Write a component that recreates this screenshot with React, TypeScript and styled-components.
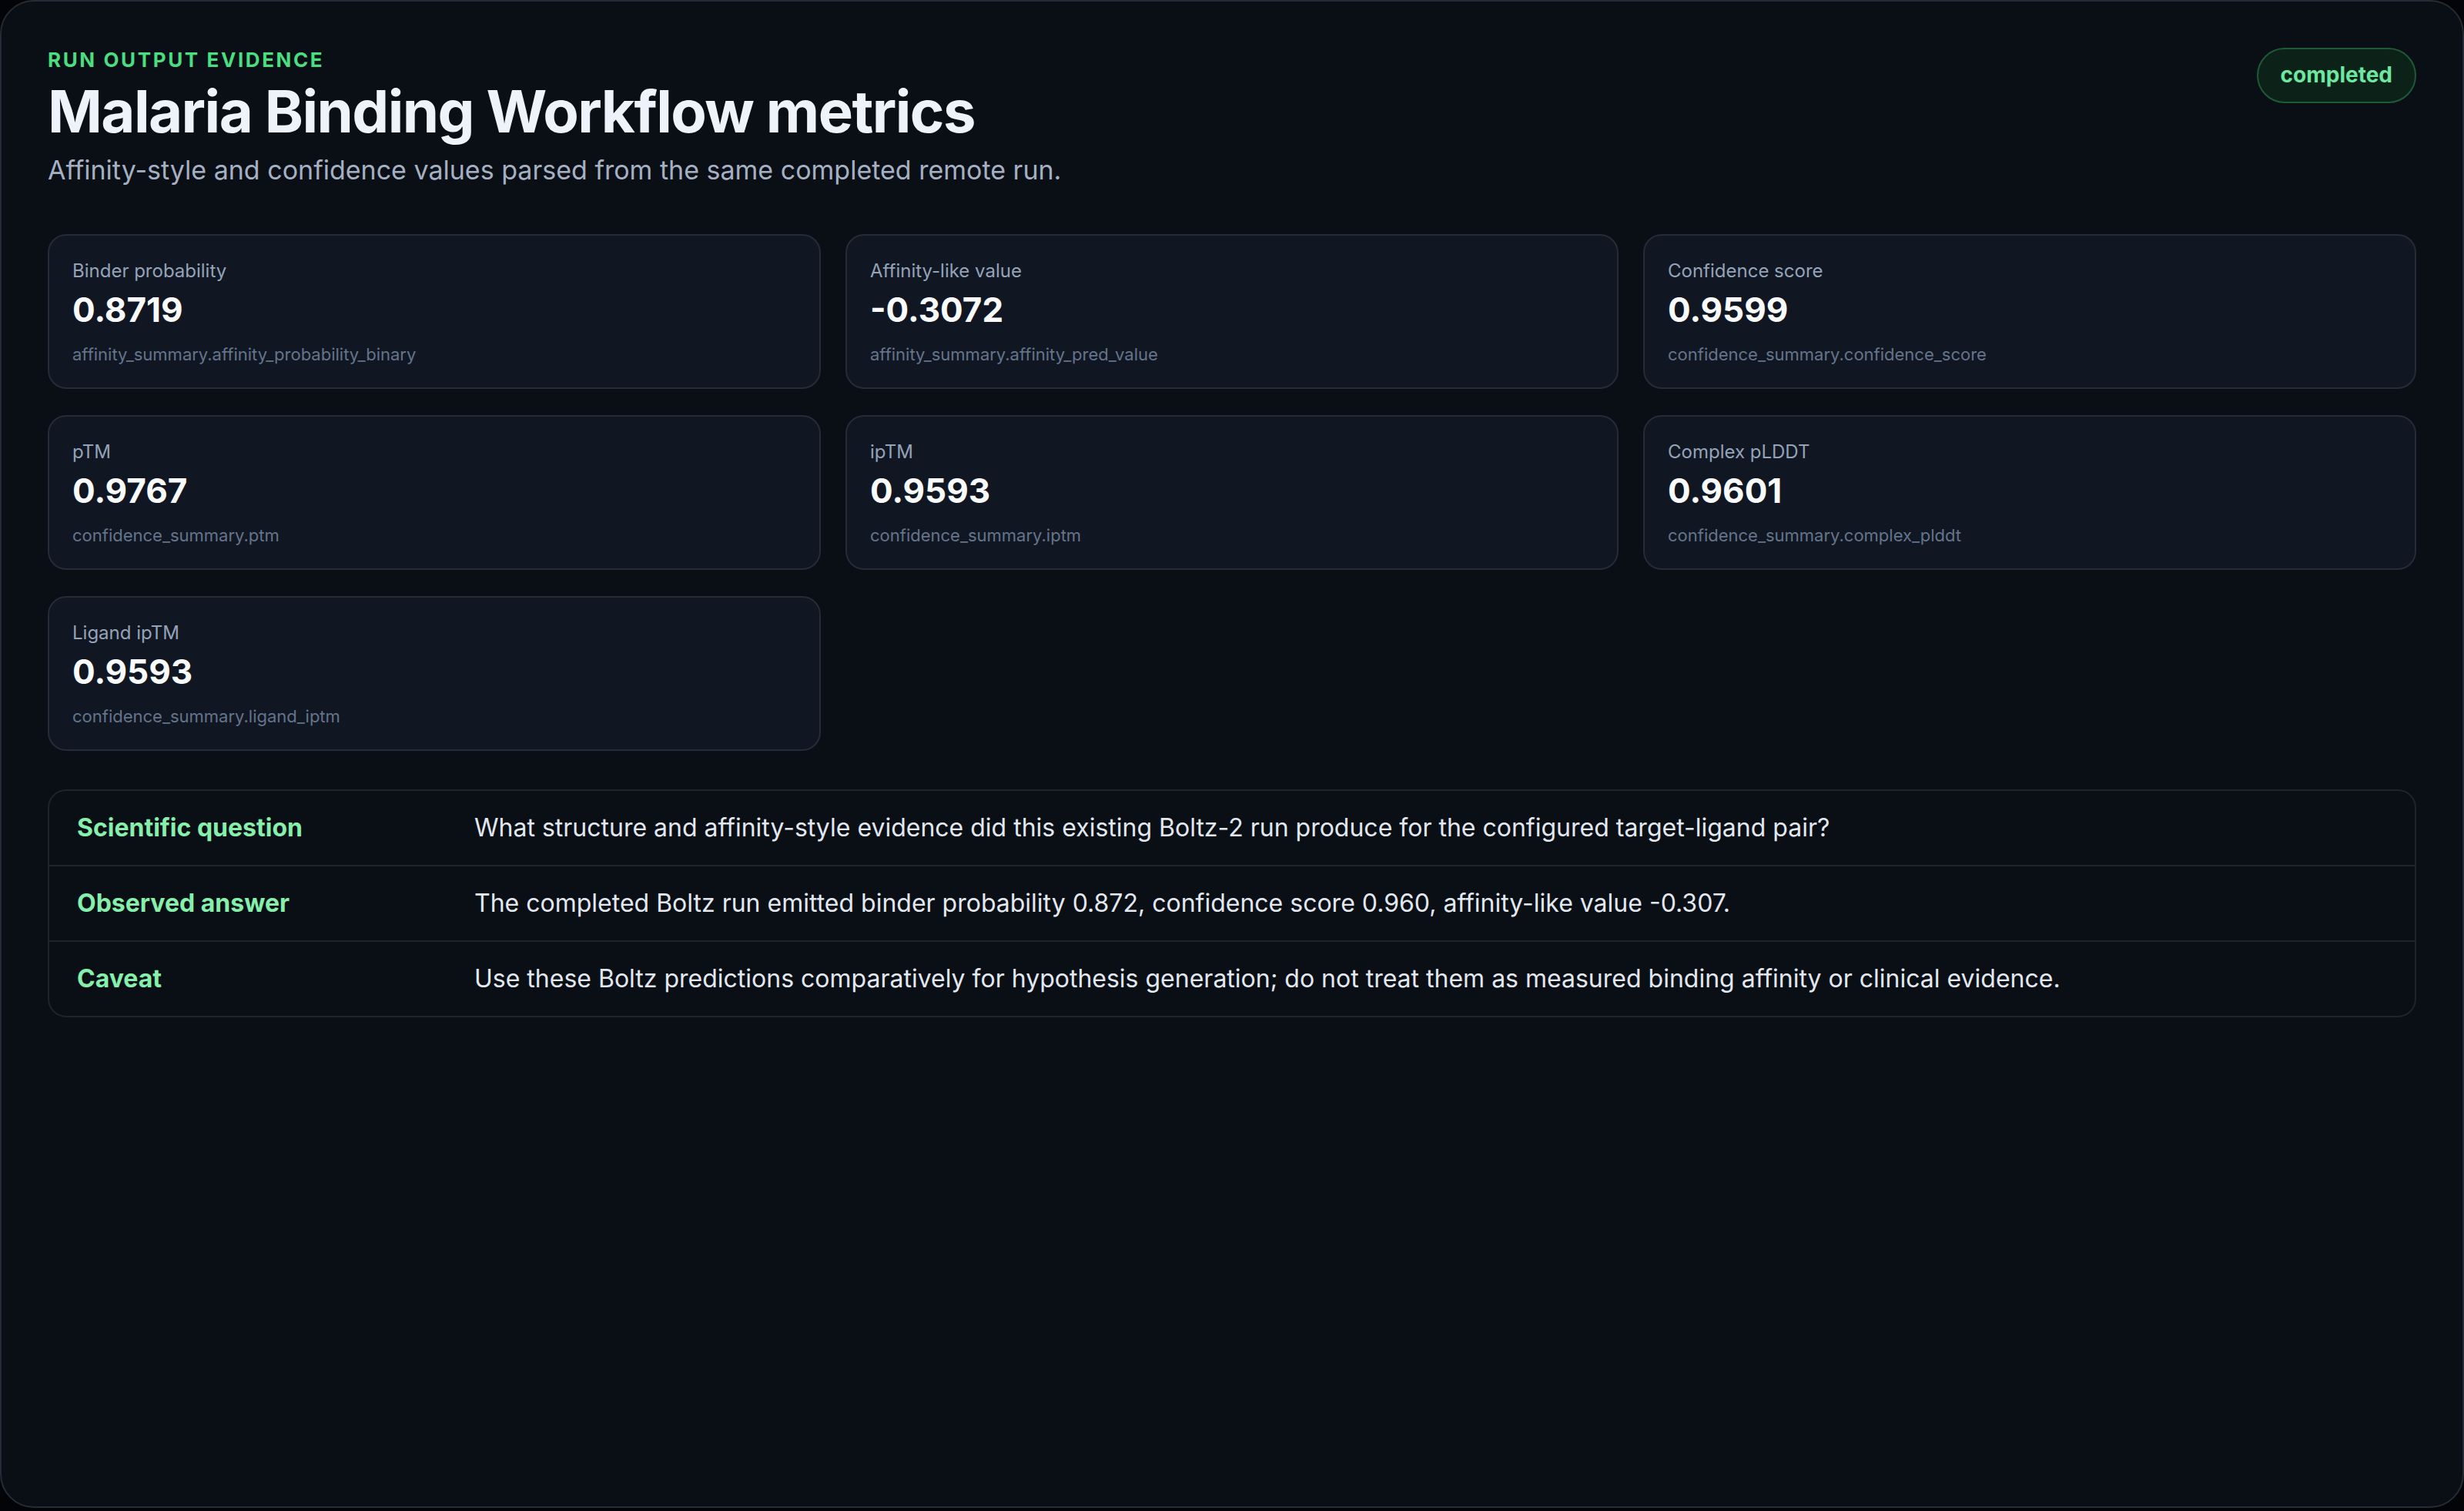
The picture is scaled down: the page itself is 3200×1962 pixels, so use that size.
import styled, { createGlobalStyle } from "styled-components";

const GlobalStyle = createGlobalStyle`
    * { box-sizing: border-box; }
    body {
        margin: 0;
        background: #030408;
        font-family: Inter, "Noto Sans", "Liberation Sans", sans-serif;
    }
`;

const Panel = styled.main`
    height: 1958px;
    padding: 60px;
    background: #0a0e15;
    border: 2px solid #252b36;
    border-radius: 44px;
`;

const Header = styled.header`
    display: flex;
    justify-content: space-between;
    align-items: flex-start;
    margin-bottom: 58px;
`;

const Eyebrow = styled.div`
    color: #4ade80;
    font-size: 26px;
    font-weight: 700;
    letter-spacing: 0.1em;
    text-transform: uppercase;
`;

const Title = styled.h1`
    margin: 10px 0 0;
    color: #eef2fb;
    font-size: 76px;
    font-weight: 700;
    line-height: 1.1;
    letter-spacing: -0.02em;
`;

const Subtitle = styled.p`
    margin: 8px 0 0;
    color: #a5b0c3;
    font-size: 34px;
    line-height: 1.5;
`;

const Badge = styled.span`
    padding: 17px 29px;
    color: #6ee7a0;
    background: #0c2219;
    border: 2px solid #1f5a37;
    border-radius: 999px;
    font-size: 28px;
    font-weight: 700;
    line-height: 1.2;
`;

const CardGrid = styled.section`
    display: grid;
    grid-template-columns: repeat(3, 1fr);
    gap: 34px 32px;
`;

const Card = styled.div`
    padding: 28px 30px 26px;
    background: #111722;
    border: 2px solid #252c38;
    border-radius: 24px;
`;

const CardLabel = styled.div`
    color: #94a3b8;
    font-size: 24px;
    line-height: 36px;
`;

const CardValue = styled.div`
    margin-top: 6px;
    color: #f8fafc;
    font-size: 44px;
    font-weight: 700;
    line-height: 52px;
`;

const CardKey = styled.div`
    margin-top: 16px;
    color: #64748b;
    font-size: 22px;
    line-height: 33px;
`;

const Table = styled.section`
    margin-top: 50px;
    border: 2px solid #1e242e;
    border-radius: 24px;
    overflow: hidden;
`;

const Row = styled.div`
    display: grid;
    grid-template-columns: 516px 1fr;
    & + & {
        border-top: 2px solid #1e242e;
    }
`;

const RowLabel = styled.div`
    padding: 24px 36px;
    color: #86efac;
    font-size: 32px;
    font-weight: 700;
    line-height: 48px;
`;

const RowValue = styled.div`
    padding: 24px 36px;
    color: #e2e8f0;
    font-size: 32px;
    line-height: 48px;
`;

const metrics = [
    { label: "Binder probability", value: "0.8719", key: "affinity_summary.affinity_probability_binary" },
    { label: "Affinity-like value", value: "-0.3072", key: "affinity_summary.affinity_pred_value" },
    { label: "Confidence score", value: "0.9599", key: "confidence_summary.confidence_score" },
    { label: "pTM", value: "0.9767", key: "confidence_summary.ptm" },
    { label: "ipTM", value: "0.9593", key: "confidence_summary.iptm" },
    { label: "Complex pLDDT", value: "0.9601", key: "confidence_summary.complex_plddt" },
    { label: "Ligand ipTM", value: "0.9593", key: "confidence_summary.ligand_iptm" },
];

const evidence = [
    {
        label: "Scientific question",
        text: "What structure and affinity-style evidence did this existing Boltz-2 run produce for the configured target-ligand pair?",
    },
    {
        label: "Observed answer",
        text: "The completed Boltz run emitted binder probability 0.872, confidence score 0.960, affinity-like value -0.307.",
    },
    {
        label: "Caveat",
        text: "Use these Boltz predictions comparatively for hypothesis generation; do not treat them as measured binding affinity or clinical evidence.",
    },
];

export default function App() {
    return (
        <>
            <GlobalStyle />
            <Panel>
                <Header>
                    <div>
                        <Eyebrow>Run output evidence</Eyebrow>
                        <Title>Malaria Binding Workflow metrics</Title>
                        <Subtitle>Affinity-style and confidence values parsed from the same completed remote run.</Subtitle>
                    </div>
                    <Badge>completed</Badge>
                </Header>

                <CardGrid>
                    {metrics.map((m) => (
                        <Card key={m.label}>
                            <CardLabel>{m.label}</CardLabel>
                            <CardValue>{m.value}</CardValue>
                            <CardKey>{m.key}</CardKey>
                        </Card>
                    ))}
                </CardGrid>

                <Table>
                    {evidence.map((e) => (
                        <Row key={e.label}>
                            <RowLabel>{e.label}</RowLabel>
                            <RowValue>{e.text}</RowValue>
                        </Row>
                    ))}
                </Table>
            </Panel>
        </>
    );
}
